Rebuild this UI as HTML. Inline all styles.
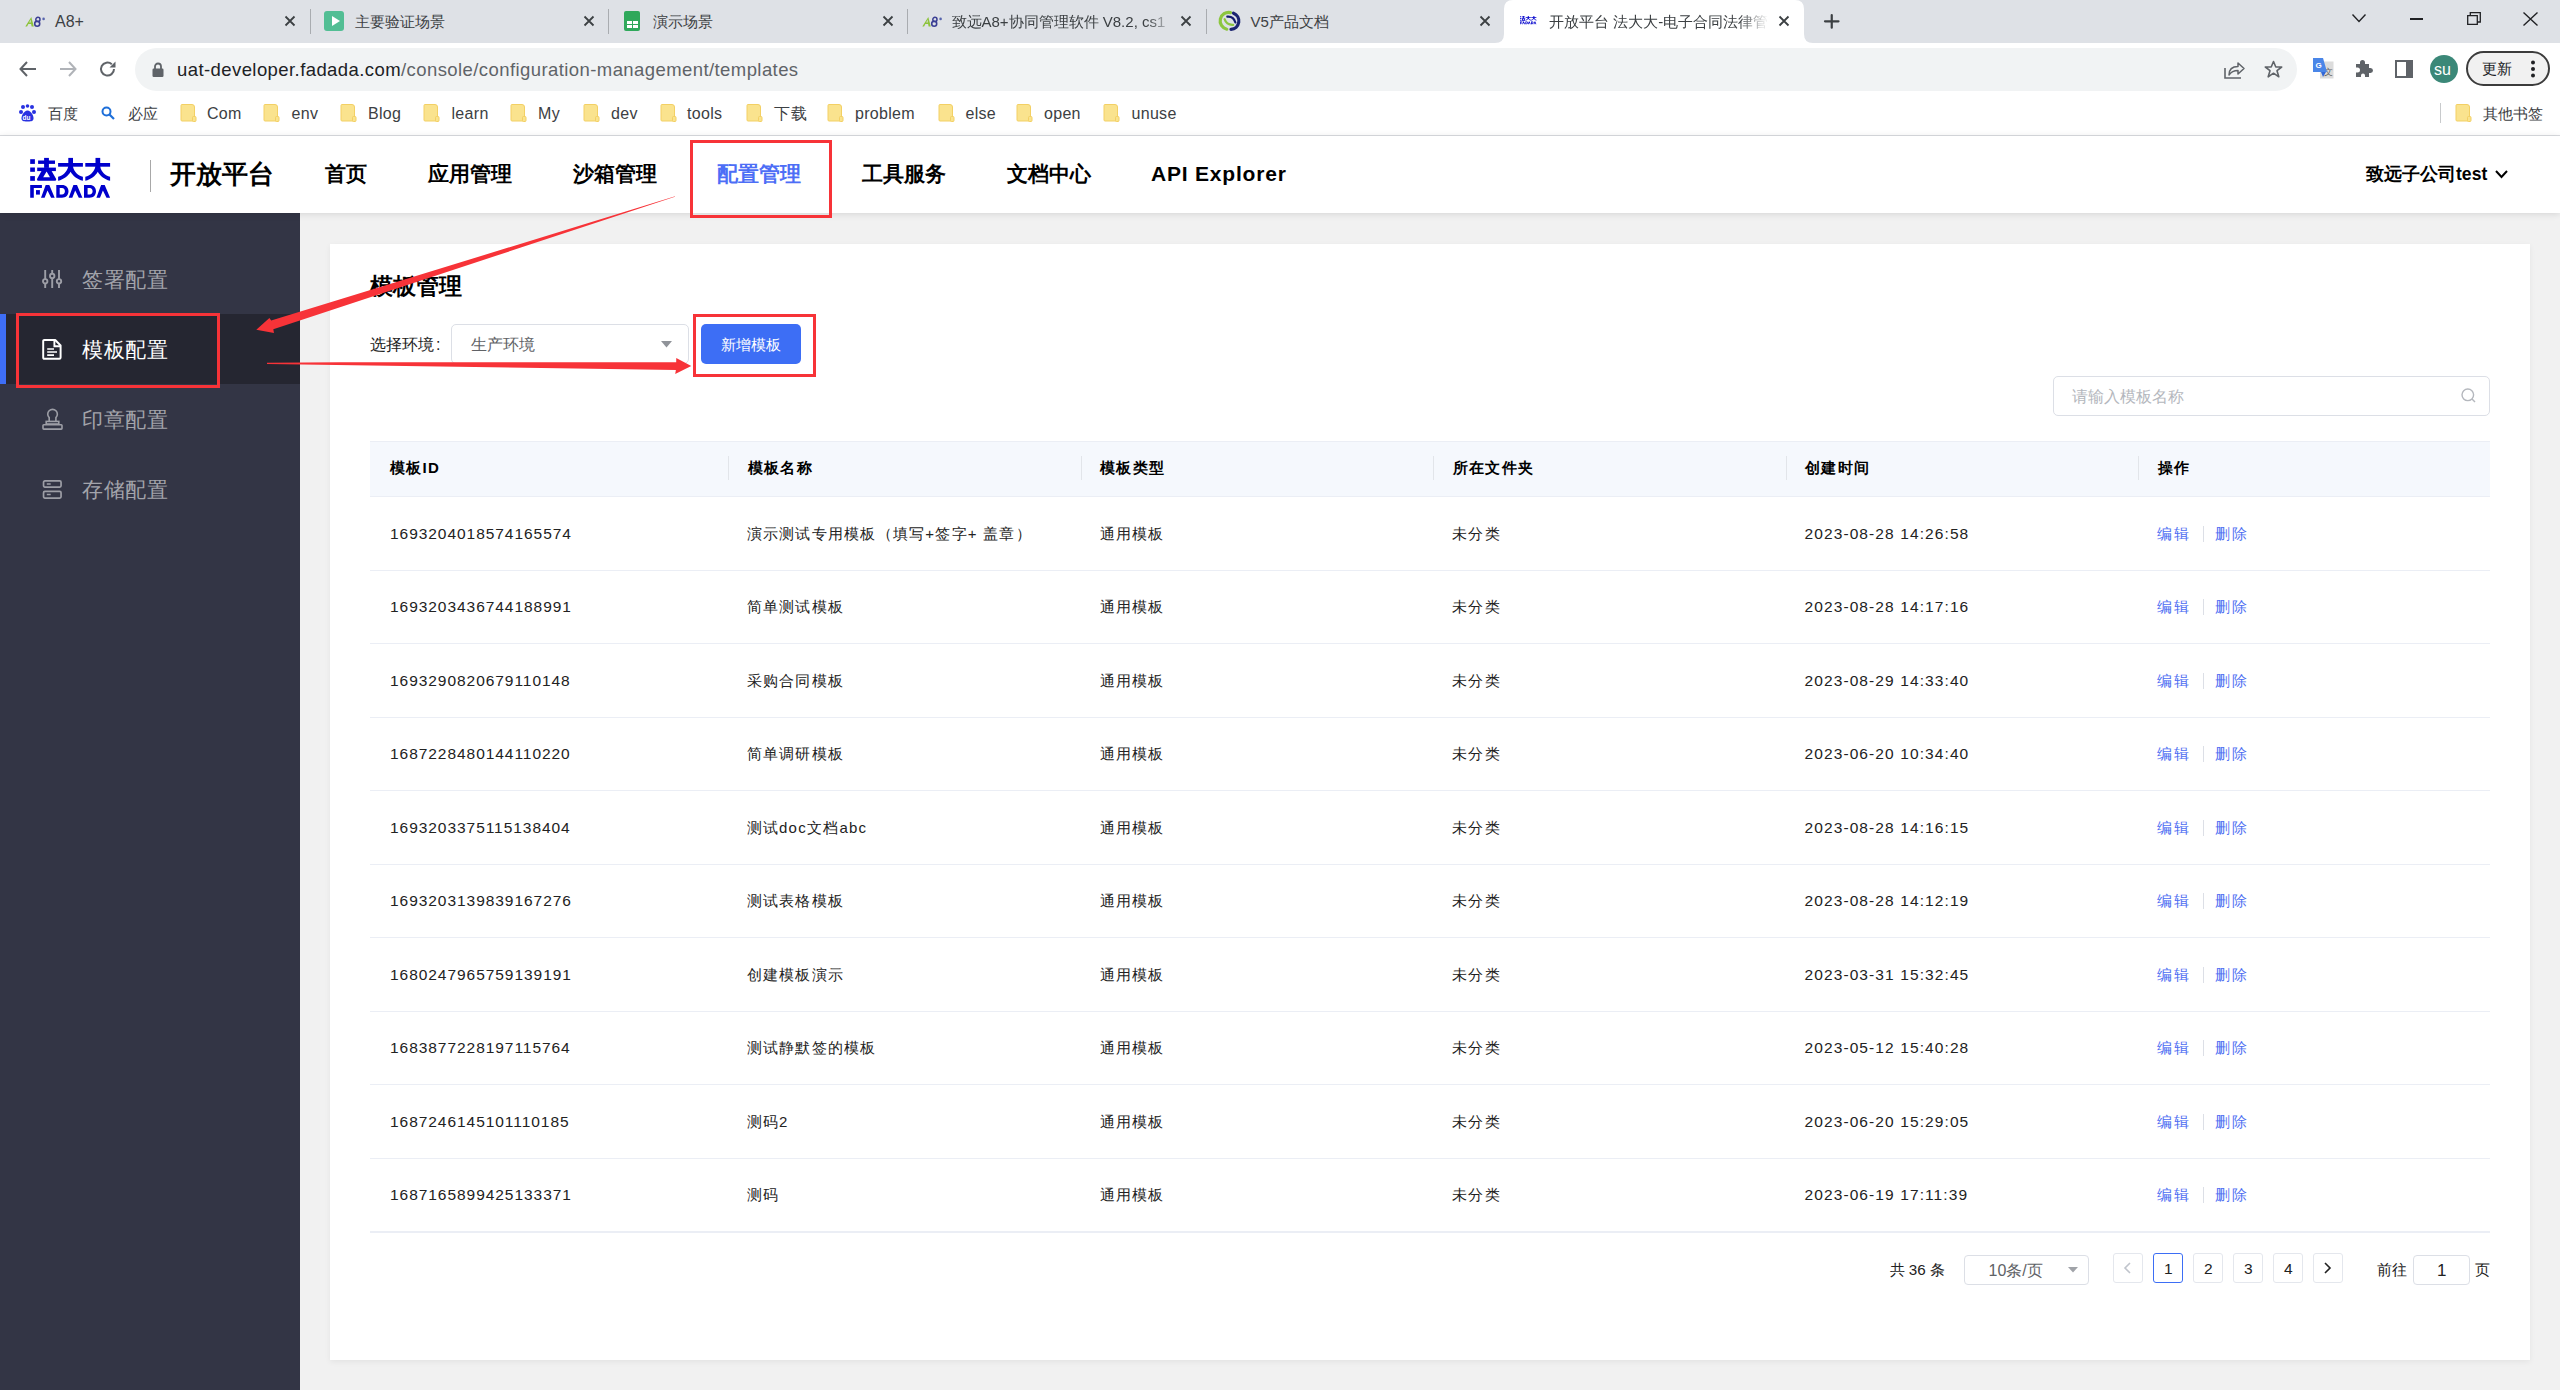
<!DOCTYPE html><html><head><meta charset="utf-8"><style>
html,body{margin:0;padding:0;width:2560px;height:1390px;overflow:hidden;background:#f1f1f1;font-family:"Liberation Sans",sans-serif;}
.t{position:absolute;white-space:nowrap;}
.b{position:absolute;box-sizing:border-box;}
svg{position:absolute;overflow:visible;}
</style></head><body>
<div class="b" style="left:0px;top:0px;width:2560px;height:43px;background:#dee1e6"></div>
<svg style="left:0;top:0" width="2560" height="50"><path d="M1495,43 Q1504,43 1504,34 L1504,9 Q1504,0 1513,0 L1795,0 Q1804,0 1804,9 L1804,34 Q1804,43 1813,43 Z" fill="#fff"/></svg>
<div class="b" style="left:309.5px;top:9px;width:1.0px;height:25px;background:#a9acb0"></div>
<div class="b" style="left:608px;top:9px;width:1px;height:25px;background:#a9acb0"></div>
<div class="b" style="left:906.5px;top:9px;width:1.0px;height:25px;background:#a9acb0"></div>
<div class="b" style="left:1205.5px;top:9px;width:1.0px;height:25px;background:#a9acb0"></div>
<svg style="left:25px;top:15.5px" width="21" height="12"><path d="M0.3,10.4 L6.3,1 L8.8,10.4 H6.6 L6.1,8.1 H3.4 L2.1,10.4 Z M4.3,6.4 H5.8 L5.5,3.6Z" fill="#8dc33b" fill-rule="evenodd"/><ellipse cx="12.9" cy="3.4" rx="2.1" ry="2.1" stroke="#3b3f94" stroke-width="1.5" fill="none"/><ellipse cx="12.2" cy="7.7" rx="2.5" ry="2.5" stroke="#3b3f94" stroke-width="1.6" fill="none"/><circle cx="18.6" cy="2.9" r="1.3" fill="#5764ad"/></svg>
<div class="t" style="left:55px;top:11px;height:22px;line-height:22px;font-size:16px;color:#3c4043">A8+</div>
<svg style="left:284.5px;top:16.2px" width="10" height="10"><path d="M0.5,0.5L9.5,9.5M9.5,0.5L0.5,9.5" stroke="#3c4043" stroke-width="1.8"/></svg>
<div class="b" style="left:323.5px;top:11px;width:20.0px;height:20px;background:#52be94;border-radius:3px"></div>
<svg style="left:331.5px;top:16px" width="8" height="10"><path d="M0,0 L8,5 L0,10Z" fill="#fff"/></svg>
<div class="t" style="left:354.5px;top:11px;height:22px;line-height:22px;font-size:15px;color:#3c4043">主要验证场景</div>
<svg style="left:584.0px;top:16.2px" width="10" height="10"><path d="M0.5,0.5L9.5,9.5M9.5,0.5L0.5,9.5" stroke="#3c4043" stroke-width="1.8"/></svg>
<div class="b" style="left:624px;top:11px;width:16px;height:20px;background:#2fa85b;border-radius:2px"></div>
<div class="b" style="left:627px;top:21px;width:5px;height:3px;background:#fff"></div>
<div class="b" style="left:633px;top:21px;width:5px;height:3px;background:#fff"></div>
<div class="b" style="left:627px;top:25px;width:5px;height:3px;background:#fff"></div>
<div class="b" style="left:633px;top:25px;width:5px;height:3px;background:#fff"></div>
<div class="t" style="left:653px;top:11px;height:22px;line-height:22px;font-size:15px;color:#3c4043">演示场景</div>
<svg style="left:882.5px;top:16.2px" width="10" height="10"><path d="M0.5,0.5L9.5,9.5M9.5,0.5L0.5,9.5" stroke="#3c4043" stroke-width="1.8"/></svg>
<svg style="left:921.5px;top:15.5px" width="21" height="12"><path d="M0.3,10.4 L6.3,1 L8.8,10.4 H6.6 L6.1,8.1 H3.4 L2.1,10.4 Z M4.3,6.4 H5.8 L5.5,3.6Z" fill="#8dc33b" fill-rule="evenodd"/><ellipse cx="12.9" cy="3.4" rx="2.1" ry="2.1" stroke="#3b3f94" stroke-width="1.5" fill="none"/><ellipse cx="12.2" cy="7.7" rx="2.5" ry="2.5" stroke="#3b3f94" stroke-width="1.6" fill="none"/><circle cx="18.6" cy="2.9" r="1.3" fill="#5764ad"/></svg>
<div class="t" style="left:951.5px;top:11px;height:22px;line-height:22px;font-size:15px;color:#3c4043;width:222px;overflow:hidden;-webkit-mask-image:linear-gradient(90deg,#000 195px,transparent 222px)">致远A8+协同管理软件 V8.2, cs1</div>
<svg style="left:1181.0px;top:16.2px" width="10" height="10"><path d="M0.5,0.5L9.5,9.5M9.5,0.5L0.5,9.5" stroke="#3c4043" stroke-width="1.8"/></svg>
<svg style="left:1219.8px;top:10.5px" width="21" height="21"><g fill="none" stroke-linecap="round"><path d="M10.5,1.6 A8.4,8.4 0 0 0 6.8,18.2" stroke="#8cc63f" stroke-width="3.2"/><path d="M4.6,8.2 Q6.5,14.2 13.2,13.8" stroke="#8cc63f" stroke-width="2.2"/><path d="M13.5,2.2 A8.4,8.4 0 0 1 11,18.4" stroke="#1b2470" stroke-width="3.2"/><path d="M7.3,5.6 Q13.6,5 15.4,11.5" stroke="#141c6e" stroke-width="2.2"/></g></svg>
<div class="t" style="left:1250.5px;top:11px;height:22px;line-height:22px;font-size:15px;color:#3c4043">V5产品文档</div>
<svg style="left:1480.0px;top:16.2px" width="10" height="10"><path d="M0.5,0.5L9.5,9.5M9.5,0.5L0.5,9.5" stroke="#3c4043" stroke-width="1.8"/></svg>
<svg style="left:1520.3px;top:16.4px" width="18" height="10"><g transform="scale(0.205) translate(-5.2,-5.9)"><g fill="#0000cc">
<rect x="5.2" y="7.2" width="4.7" height="4.7"/><rect x="5.2" y="15.5" width="4.7" height="4.3"/><rect x="5.2" y="24.1" width="4.7" height="4.7"/>
<rect x="19.1" y="5.9" width="4.8" height="10"/><rect x="13.1" y="8.5" width="16.9" height="3.4"/><rect x="12.2" y="15.6" width="18.7" height="3.5"/>
<path d="M16.5,19.1 L11.9,27.3 L12.6,28.8 L30.6,28.8 L31.3,27.3 L26.6,19.1 Z M18.2,25.2 L21.6,19.4 L25,25.2 Z" fill-rule="evenodd"/>
<g><rect x="33.1" y="11" width="24.8" height="3.7"/><rect x="43.3" y="5.9" width="4.7" height="9.6"/>
<path d="M43.2,14.5 C42,20 38,23.5 33.1,24.8 L33.1,28.8 C39,27.5 43.5,23.5 45.6,19.8 C47.7,23.5 52,27.5 57.9,28.8 L57.9,24.8 C53,23.5 49,20 48,14.5 Z"/></g>
<g transform="translate(27.2,0)"><rect x="33.1" y="11" width="24.8" height="3.7"/><rect x="43.3" y="5.9" width="4.7" height="9.6"/>
<path d="M43.2,14.5 C42,20 38,23.5 33.1,24.8 L33.1,28.8 C39,27.5 43.5,23.5 45.6,19.8 C47.7,23.5 52,27.5 57.9,28.8 L57.9,24.8 C53,23.5 49,20 48,14.5 Z"/></g>
<path d="M5.2,32.9 H16.9 V36 H8.8 V45.7 H5.2 Z"/><rect x="11" y="38.1" width="3.9" height="4.5"/>
<path d="M20.7,32.9 H24.3 L29.7,45.7 H26.1 L22.5,38.6 L19.6,45.7 H16 Z"/>
<path d="M31.3,32.9 H37 C41,32.9 43.5,35.5 43.5,39.3 C43.5,43.1 41,45.7 37,45.7 H31.3 Z M34.7,36 V42.6 H37 C38.9,42.6 39.9,41.2 39.9,39.3 C39.9,37.4 38.9,36 37,36 Z" fill-rule="evenodd"/>
<path transform="translate(27.7,0)" d="M20.7,32.9 H24.3 L29.7,45.7 H26.1 L22.5,38.6 L19.6,45.7 H16 Z"/>
<path d="M59,32.9 H64.6 C68.6,32.9 71,35.5 71,39.3 C71,43.1 68.6,45.7 64.6,45.7 H59 Z M62.6,36 V42.6 H64.6 C66.5,42.6 67.6,41.2 67.6,39.3 C67.6,37.4 66.5,36 64.6,36 Z" fill-rule="evenodd"/>
<path transform="translate(55.4,0)" d="M20.7,32.9 H24.3 L29.7,45.7 H26.1 L22.5,38.6 L19.6,45.7 H16 Z"/>
</g></g></svg>
<div class="t" style="left:1549px;top:11px;height:22px;line-height:22px;font-size:15px;color:#3c4043;width:220px;overflow:hidden;-webkit-mask-image:linear-gradient(90deg,#000 190px,transparent 220px)">开放平台 法大大-电子合同法律管</div>
<svg style="left:1778.5px;top:16.2px" width="10" height="10"><path d="M0.5,0.5L9.5,9.5M9.5,0.5L0.5,9.5" stroke="#3c4043" stroke-width="1.8"/></svg>
<svg style="left:1823.5px;top:14px" width="16" height="15"><path d="M7.75,1V13.7M1,7.3H14.5" stroke="#3c4043" stroke-width="2.2" stroke-linecap="round"/></svg>
<svg style="left:2352px;top:14px" width="14" height="9"><path d="M0.5,0.5L7,7.5L13.5,0.5" fill="none" stroke="#202124" stroke-width="1.4"/></svg>
<div class="b" style="left:2410px;top:18px;width:13px;height:1.5px;background:#202124"></div>
<svg style="left:2467px;top:12px" width="14" height="13"><path d="M0.7,3.7H10.3V12.3H0.7Z M3.3,3.7V0.7H13.3V10H10.3" fill="none" stroke="#202124" stroke-width="1.3"/></svg>
<svg style="left:2523px;top:12px" width="15" height="14"><path d="M0.5,0.5L14.5,13.5M14.5,0.5L0.5,13.5" stroke="#202124" stroke-width="1.4"/></svg>
<div class="b" style="left:0px;top:43px;width:2560px;height:49px;background:#fff"></div>
<svg style="left:19px;top:61px" width="18" height="16"><path d="M17,8H2M8,1L1.5,8L8,15" fill="none" stroke="#5f6368" stroke-width="2"/></svg>
<svg style="left:59px;top:61px" width="18" height="16"><path d="M1,8H16M10,1L16.5,8L10,15" fill="none" stroke="#b0b3b8" stroke-width="2"/></svg>
<svg style="left:99px;top:60px" width="18" height="18"><path d="M15,9A6.5,6.5 0 1 1 12.8,4.2" fill="none" stroke="#5f6368" stroke-width="2"/><path d="M16.5,1.5V7.5H10.5Z" fill="#5f6368"/></svg>
<div class="b" style="left:135px;top:48px;width:2162px;height:43px;background:#f1f3f4;border-radius:22px"></div>
<svg style="left:152px;top:62px" width="12" height="15"><path d="M3,7V4.5A3,3 0 0 1 9,4.5V7" fill="none" stroke="#5f6368" stroke-width="1.8"/><rect x="0.5" y="6.5" width="11" height="8.5" rx="1.2" fill="#5f6368"/></svg>
<div class="t" style="left:177px;top:56px;height:28px;line-height:28px;font-size:18.5px;letter-spacing:0.42px;color:#202124">uat-developer.fadada.com<span style="color:#5f6368">/console/configuration-management/templates</span></div>
<svg style="left:2224px;top:60px" width="21" height="19"><path d="M1,8V18H17" fill="none" stroke="#5f6368" stroke-width="1.6"/><path d="M5,15C5,9 9,6.5 14,6.5V3L20,8.5L14,14V10.5C10,10.5 7,12 5,15Z" fill="none" stroke="#5f6368" stroke-width="1.5" stroke-linejoin="round"/></svg>
<svg style="left:2264px;top:60px" width="19" height="19"><path d="M9.5,1.5L11.8,7H17.7L13,10.7L14.8,16.8L9.5,13.2L4.2,16.8L6,10.7L1.3,7H7.2Z" fill="none" stroke="#5f6368" stroke-width="1.6" stroke-linejoin="round"/></svg>
<svg style="left:2313px;top:58px" width="21" height="21"><rect x="7" y="3.5" width="13.5" height="17" fill="#dcdcdc"/><text x="11" y="17" font-size="9" fill="#666" font-family="Liberation Sans">文</text><path d="M0,0H10L14,14H0Z" fill="#4a86e8"/><path d="M8,14H13L10,19Z" fill="#3367d6"/><text x="2.5" y="10" font-size="8" font-weight="bold" fill="#fff" font-family="Liberation Sans">G</text></svg>
<svg style="left:2354px;top:59px" width="20" height="19"><path d="M2,5H6V3.5A2.5,2.5 0 0 1 11,3.5V5H15V9H16.5A2.5,2.5 0 0 1 16.5,14H15V18H11V16.5A2,2 0 0 0 7,16.5V18H2V13.5H3.5A2.5,2.5 0 0 0 3.5,8.5H2Z" fill="#5f6368"/></svg>
<svg style="left:2395px;top:60px" width="18" height="18"><rect x="1" y="1" width="16" height="16" fill="none" stroke="#5f6368" stroke-width="2"/><rect x="11" y="1" width="6" height="16" fill="#5f6368"/></svg>
<div class="b" style="left:2430px;top:55px;width:28px;height:28px;background:#3b8878;border-radius:50%"></div>
<div class="t" style="left:2434px;top:56.50px;height:25px;line-height:25px;font-size:16px;color:#fff;font-weight:normal;letter-spacing:0px;">su</div>
<div class="b" style="left:2466px;top:51px;width:84px;height:35px;border:2px solid #3c3c3c;border-radius:18px;background:#f1f1f1"></div>
<div class="t" style="left:2482px;top:56.50px;height:24px;line-height:24px;font-size:15px;color:#202124;font-weight:normal;letter-spacing:0px;">更新</div>
<svg style="left:2530px;top:60px" width="6" height="18"><circle cx="3" cy="2.5" r="2" fill="#202124"/><circle cx="3" cy="9" r="2" fill="#202124"/><circle cx="3" cy="15.5" r="2" fill="#202124"/></svg>
<div class="b" style="left:0px;top:92px;width:2560px;height:43px;background:#fff"></div>
<div class="b" style="left:0px;top:135px;width:2560px;height:1px;background:#dadce0"></div>
<svg style="left:19px;top:104px" width="17" height="18"><circle cx="4" cy="3" r="2" fill="#2932e1"/><circle cx="8.5" cy="2" r="1.8" fill="#2932e1"/><circle cx="13" cy="3" r="2" fill="#2932e1"/><circle cx="2" cy="8" r="2" fill="#2932e1"/><circle cx="15" cy="8" r="2" fill="#2932e1"/><path d="M8.5,6.5C5,6.5 2,12 2.5,15C3,17.5 6,17.5 8.5,17.5C11,17.5 14,17.5 14.5,15C15,12 12,6.5 8.5,6.5Z" fill="#2932e1"/><text x="3.6" y="16" font-size="6.5" font-weight="bold" fill="#fff" font-family="Liberation Sans">du</text></svg>
<div class="t" style="left:48px;top:101.50px;height:24px;line-height:24px;font-size:15px;color:#3c4043;font-weight:normal;letter-spacing:0px;">百度</div>
<svg style="left:101px;top:106px" width="14" height="14"><circle cx="5.5" cy="5.5" r="4" fill="none" stroke="#1e6fd9" stroke-width="2"/><path d="M8.5,8.5L13,13" stroke="#1e6fd9" stroke-width="2.2"/></svg>
<div class="t" style="left:127.5px;top:101.50px;height:24px;line-height:24px;font-size:15px;color:#3c4043;font-weight:normal;letter-spacing:0px;">必应</div>
<svg style="left:180px;top:104px" width="17" height="18"><path d="M1,1.5Q1,0.5 2,0.5H12Q14.5,0.5 14.5,3V14.5H13.5V17H2Q1,17 1,16Z" fill="#fae38e" stroke="#f3d064" stroke-width="1"/><rect x="12.5" y="12.5" width="3.5" height="5" rx="1" fill="#fae38e" stroke="#f3d064" stroke-width="1"/></svg>
<div class="t" style="left:207px;top:101.00px;height:25px;line-height:25px;font-size:16px;color:#3c4043;font-weight:normal;letter-spacing:0.3px;">Com</div>
<svg style="left:262.5px;top:104px" width="17" height="18"><path d="M1,1.5Q1,0.5 2,0.5H12Q14.5,0.5 14.5,3V14.5H13.5V17H2Q1,17 1,16Z" fill="#fae38e" stroke="#f3d064" stroke-width="1"/><rect x="12.5" y="12.5" width="3.5" height="5" rx="1" fill="#fae38e" stroke="#f3d064" stroke-width="1"/></svg>
<div class="t" style="left:291.5px;top:101.00px;height:25px;line-height:25px;font-size:16px;color:#3c4043;font-weight:normal;letter-spacing:0.3px;">env</div>
<svg style="left:340px;top:104px" width="17" height="18"><path d="M1,1.5Q1,0.5 2,0.5H12Q14.5,0.5 14.5,3V14.5H13.5V17H2Q1,17 1,16Z" fill="#fae38e" stroke="#f3d064" stroke-width="1"/><rect x="12.5" y="12.5" width="3.5" height="5" rx="1" fill="#fae38e" stroke="#f3d064" stroke-width="1"/></svg>
<div class="t" style="left:368px;top:101.00px;height:25px;line-height:25px;font-size:16px;color:#3c4043;font-weight:normal;letter-spacing:0.3px;">Blog</div>
<svg style="left:423px;top:104px" width="17" height="18"><path d="M1,1.5Q1,0.5 2,0.5H12Q14.5,0.5 14.5,3V14.5H13.5V17H2Q1,17 1,16Z" fill="#fae38e" stroke="#f3d064" stroke-width="1"/><rect x="12.5" y="12.5" width="3.5" height="5" rx="1" fill="#fae38e" stroke="#f3d064" stroke-width="1"/></svg>
<div class="t" style="left:451.5px;top:101.00px;height:25px;line-height:25px;font-size:16px;color:#3c4043;font-weight:normal;letter-spacing:0.3px;">learn</div>
<svg style="left:510px;top:104px" width="17" height="18"><path d="M1,1.5Q1,0.5 2,0.5H12Q14.5,0.5 14.5,3V14.5H13.5V17H2Q1,17 1,16Z" fill="#fae38e" stroke="#f3d064" stroke-width="1"/><rect x="12.5" y="12.5" width="3.5" height="5" rx="1" fill="#fae38e" stroke="#f3d064" stroke-width="1"/></svg>
<div class="t" style="left:538px;top:101.00px;height:25px;line-height:25px;font-size:16px;color:#3c4043;font-weight:normal;letter-spacing:0.3px;">My</div>
<svg style="left:583px;top:104px" width="17" height="18"><path d="M1,1.5Q1,0.5 2,0.5H12Q14.5,0.5 14.5,3V14.5H13.5V17H2Q1,17 1,16Z" fill="#fae38e" stroke="#f3d064" stroke-width="1"/><rect x="12.5" y="12.5" width="3.5" height="5" rx="1" fill="#fae38e" stroke="#f3d064" stroke-width="1"/></svg>
<div class="t" style="left:611px;top:101.00px;height:25px;line-height:25px;font-size:16px;color:#3c4043;font-weight:normal;letter-spacing:0.3px;">dev</div>
<svg style="left:660px;top:104px" width="17" height="18"><path d="M1,1.5Q1,0.5 2,0.5H12Q14.5,0.5 14.5,3V14.5H13.5V17H2Q1,17 1,16Z" fill="#fae38e" stroke="#f3d064" stroke-width="1"/><rect x="12.5" y="12.5" width="3.5" height="5" rx="1" fill="#fae38e" stroke="#f3d064" stroke-width="1"/></svg>
<div class="t" style="left:687px;top:101.00px;height:25px;line-height:25px;font-size:16px;color:#3c4043;font-weight:normal;letter-spacing:0.3px;">tools</div>
<svg style="left:746px;top:104px" width="17" height="18"><path d="M1,1.5Q1,0.5 2,0.5H12Q14.5,0.5 14.5,3V14.5H13.5V17H2Q1,17 1,16Z" fill="#fae38e" stroke="#f3d064" stroke-width="1"/><rect x="12.5" y="12.5" width="3.5" height="5" rx="1" fill="#fae38e" stroke="#f3d064" stroke-width="1"/></svg>
<div class="t" style="left:774.3px;top:101.00px;height:25px;line-height:25px;font-size:16px;color:#3c4043;font-weight:normal;letter-spacing:0.3px;">下载</div>
<svg style="left:827px;top:104px" width="17" height="18"><path d="M1,1.5Q1,0.5 2,0.5H12Q14.5,0.5 14.5,3V14.5H13.5V17H2Q1,17 1,16Z" fill="#fae38e" stroke="#f3d064" stroke-width="1"/><rect x="12.5" y="12.5" width="3.5" height="5" rx="1" fill="#fae38e" stroke="#f3d064" stroke-width="1"/></svg>
<div class="t" style="left:855px;top:101.00px;height:25px;line-height:25px;font-size:16px;color:#3c4043;font-weight:normal;letter-spacing:0.3px;">problem</div>
<svg style="left:937.5px;top:104px" width="17" height="18"><path d="M1,1.5Q1,0.5 2,0.5H12Q14.5,0.5 14.5,3V14.5H13.5V17H2Q1,17 1,16Z" fill="#fae38e" stroke="#f3d064" stroke-width="1"/><rect x="12.5" y="12.5" width="3.5" height="5" rx="1" fill="#fae38e" stroke="#f3d064" stroke-width="1"/></svg>
<div class="t" style="left:965.5px;top:101.00px;height:25px;line-height:25px;font-size:16px;color:#3c4043;font-weight:normal;letter-spacing:0.3px;">else</div>
<svg style="left:1016px;top:104px" width="17" height="18"><path d="M1,1.5Q1,0.5 2,0.5H12Q14.5,0.5 14.5,3V14.5H13.5V17H2Q1,17 1,16Z" fill="#fae38e" stroke="#f3d064" stroke-width="1"/><rect x="12.5" y="12.5" width="3.5" height="5" rx="1" fill="#fae38e" stroke="#f3d064" stroke-width="1"/></svg>
<div class="t" style="left:1044px;top:101.00px;height:25px;line-height:25px;font-size:16px;color:#3c4043;font-weight:normal;letter-spacing:0.3px;">open</div>
<svg style="left:1103px;top:104px" width="17" height="18"><path d="M1,1.5Q1,0.5 2,0.5H12Q14.5,0.5 14.5,3V14.5H13.5V17H2Q1,17 1,16Z" fill="#fae38e" stroke="#f3d064" stroke-width="1"/><rect x="12.5" y="12.5" width="3.5" height="5" rx="1" fill="#fae38e" stroke="#f3d064" stroke-width="1"/></svg>
<div class="t" style="left:1131.5px;top:101.00px;height:25px;line-height:25px;font-size:16px;color:#3c4043;font-weight:normal;letter-spacing:0.3px;">unuse</div>
<div class="b" style="left:2440px;top:103px;width:1px;height:20px;background:#c8cacc"></div>
<svg style="left:2455px;top:104px" width="17" height="18"><path d="M1,1.5Q1,0.5 2,0.5H12Q14.5,0.5 14.5,3V14.5H13.5V17H2Q1,17 1,16Z" fill="#fae38e" stroke="#f3d064" stroke-width="1"/><rect x="12.5" y="12.5" width="3.5" height="5" rx="1" fill="#fae38e" stroke="#f3d064" stroke-width="1"/></svg>
<div class="t" style="left:2482.5px;top:101.50px;height:24px;line-height:24px;font-size:15px;color:#3c4043;font-weight:normal;letter-spacing:0px;">其他书签</div>
<div class="b" style="left:0px;top:213px;width:300px;height:1177px;background:#333545"></div>
<div class="b" style="left:0px;top:314px;width:300px;height:70px;background:#252631"></div>
<div class="b" style="left:0px;top:314px;width:6px;height:70px;background:#3e6ef6"></div>
<div class="t" style="left:82px;top:263.00px;height:34px;line-height:34px;font-size:21.4px;color:#a3a4ab;font-weight:normal;letter-spacing:0.65px;">签署配置</div>
<div class="t" style="left:82px;top:333.00px;height:34px;line-height:34px;font-size:21.4px;color:#ffffff;font-weight:normal;letter-spacing:0.65px;">模板配置</div>
<div class="t" style="left:82px;top:403.00px;height:34px;line-height:34px;font-size:21.4px;color:#a3a4ab;font-weight:normal;letter-spacing:0.65px;">印章配置</div>
<div class="t" style="left:82px;top:473.00px;height:34px;line-height:34px;font-size:21.4px;color:#a3a4ab;font-weight:normal;letter-spacing:0.65px;">存储配置</div>
<svg style="left:42px;top:270px" width="22" height="20"><g fill="none" stroke="#9d9ea6" stroke-width="1.9"><path d="M3.2,0V18M10.2,0V18M17,0V18"/></g><g fill="#333545" stroke="#9d9ea6" stroke-width="1.9"><circle cx="3.2" cy="11.3" r="2.2"/><circle cx="10.2" cy="5.9" r="2.2"/><circle cx="17" cy="11.3" r="2.2"/></g></svg>
<svg style="left:42px;top:339px" width="21" height="22"><path d="M1.2,2.2Q1.2,1 2.4,1H13.2L18.6,6.5V18.6Q18.6,19.8 17.4,19.8H2.4Q1.2,19.8 1.2,18.6Z" fill="none" stroke="#fff" stroke-width="1.95" stroke-linejoin="round"/><path d="M12.4,1V7.2H18.6" fill="none" stroke="#fff" stroke-width="1.9"/><path d="M5.2,10H12M5.2,13H15M5.2,16.1H12" stroke="#fff" stroke-width="1.6"/></svg>
<svg style="left:42px;top:408px" width="22" height="23"><g fill="none" stroke="#9d9ea6" stroke-width="1.6"><path d="M7.2,13V9.6A4.8,4.8 0 1 1 13.9,9.6V13"/><rect x="4.2" y="13.4" width="12.6" height="2.6"/><rect x="1" y="16.8" width="19" height="4.3" rx="0.8"/></g></svg>
<svg style="left:42px;top:479px" width="21" height="21"><g fill="none" stroke="#9d9ea6" stroke-width="1.7"><rect x="1.55" y="1.85" width="17.5" height="6.3" rx="1.3"/><rect x="1.55" y="12.45" width="17.5" height="6.6" rx="1.3"/></g><path d="M4.8,5.1H8.7M4.8,15.5H8.7" stroke="#9d9ea6" stroke-width="1.5"/></svg>
<div class="b" style="left:0px;top:136px;width:2560px;height:76.5px;background:#fff;box-shadow:0 1px 7px rgba(0,0,0,0.12)"></div>
<svg style="left:25px;top:152px" width="90" height="50"><g fill="#0000cc">
<rect x="5.2" y="7.2" width="4.7" height="4.7"/><rect x="5.2" y="15.5" width="4.7" height="4.3"/><rect x="5.2" y="24.1" width="4.7" height="4.7"/>
<rect x="19.1" y="5.9" width="4.8" height="10"/><rect x="13.1" y="8.5" width="16.9" height="3.4"/><rect x="12.2" y="15.6" width="18.7" height="3.5"/>
<path d="M16.5,19.1 L11.9,27.3 L12.6,28.8 L30.6,28.8 L31.3,27.3 L26.6,19.1 Z M18.2,25.2 L21.6,19.4 L25,25.2 Z" fill-rule="evenodd"/>
<g><rect x="33.1" y="11" width="24.8" height="3.7"/><rect x="43.3" y="5.9" width="4.7" height="9.6"/>
<path d="M43.2,14.5 C42,20 38,23.5 33.1,24.8 L33.1,28.8 C39,27.5 43.5,23.5 45.6,19.8 C47.7,23.5 52,27.5 57.9,28.8 L57.9,24.8 C53,23.5 49,20 48,14.5 Z"/></g>
<g transform="translate(27.2,0)"><rect x="33.1" y="11" width="24.8" height="3.7"/><rect x="43.3" y="5.9" width="4.7" height="9.6"/>
<path d="M43.2,14.5 C42,20 38,23.5 33.1,24.8 L33.1,28.8 C39,27.5 43.5,23.5 45.6,19.8 C47.7,23.5 52,27.5 57.9,28.8 L57.9,24.8 C53,23.5 49,20 48,14.5 Z"/></g>
<path d="M5.2,32.9 H16.9 V36 H8.8 V45.7 H5.2 Z"/><rect x="11" y="38.1" width="3.9" height="4.5"/>
<path d="M20.7,32.9 H24.3 L29.7,45.7 H26.1 L22.5,38.6 L19.6,45.7 H16 Z"/>
<path d="M31.3,32.9 H37 C41,32.9 43.5,35.5 43.5,39.3 C43.5,43.1 41,45.7 37,45.7 H31.3 Z M34.7,36 V42.6 H37 C38.9,42.6 39.9,41.2 39.9,39.3 C39.9,37.4 38.9,36 37,36 Z" fill-rule="evenodd"/>
<path transform="translate(27.7,0)" d="M20.7,32.9 H24.3 L29.7,45.7 H26.1 L22.5,38.6 L19.6,45.7 H16 Z"/>
<path d="M59,32.9 H64.6 C68.6,32.9 71,35.5 71,39.3 C71,43.1 68.6,45.7 64.6,45.7 H59 Z M62.6,36 V42.6 H64.6 C66.5,42.6 67.6,41.2 67.6,39.3 C67.6,37.4 66.5,36 64.6,36 Z" fill-rule="evenodd"/>
<path transform="translate(55.4,0)" d="M20.7,32.9 H24.3 L29.7,45.7 H26.1 L22.5,38.6 L19.6,45.7 H16 Z"/>
</g></svg>
<div class="b" style="left:150px;top:160px;width:1px;height:32px;background:#a8a8a8"></div>
<div class="t" style="left:169.5px;top:153.00px;height:42px;line-height:42px;font-size:26.3px;color:#000;font-weight:bold;letter-spacing:0px;">开放平台</div>
<div class="t" style="left:325px;top:156.90px;height:33px;line-height:33px;font-size:20.8px;color:#000;font-weight:bold;letter-spacing:0px;">首页</div>
<div class="t" style="left:427.5px;top:156.90px;height:33px;line-height:33px;font-size:20.8px;color:#000;font-weight:bold;letter-spacing:0px;">应用管理</div>
<div class="t" style="left:572.5px;top:156.90px;height:33px;line-height:33px;font-size:20.8px;color:#000;font-weight:bold;letter-spacing:0px;">沙箱管理</div>
<div class="t" style="left:717px;top:156.90px;height:33px;line-height:33px;font-size:20.8px;color:#4d6ef6;font-weight:bold;letter-spacing:0px;">配置管理</div>
<div class="t" style="left:861.5px;top:156.90px;height:33px;line-height:33px;font-size:20.8px;color:#000;font-weight:bold;letter-spacing:0px;">工具服务</div>
<div class="t" style="left:1007px;top:156.90px;height:33px;line-height:33px;font-size:20.8px;color:#000;font-weight:bold;letter-spacing:0px;">文档中心</div>
<div class="t" style="left:1151px;top:156.90px;height:33px;line-height:33px;font-size:21px;color:#000;font-weight:bold;letter-spacing:0.8px;">API Explorer</div>
<div class="t" style="left:2366px;top:160.00px;height:28px;line-height:28px;font-size:17.6px;color:#000;font-weight:bold;letter-spacing:0px;">致远子公司test</div>
<svg style="left:2495px;top:170px" width="13" height="9"><path d="M1,1L6.5,7L12,1" fill="none" stroke="#000" stroke-width="2"/></svg>
<div class="b" style="left:330px;top:244px;width:2200px;height:1115.5px;background:#fff;box-shadow:0 2px 6px rgba(0,0,0,0.06)"></div>
<div class="t" style="left:369.5px;top:268.20px;height:36px;line-height:36px;font-size:23px;color:#000;font-weight:bold;letter-spacing:0px;">模板管理</div>
<div class="t" style="left:369.5px;top:332.00px;height:25px;line-height:25px;font-size:16px;color:#222;font-weight:normal;letter-spacing:0px;">选择环境<span style="margin-left:2.5px">:</span></div>
<div class="b" style="left:451px;top:324px;width:238px;height:40px;border:1px solid #dcdfe6;border-radius:5px;background:#fff"></div>
<div class="t" style="left:470.5px;top:332.00px;height:25px;line-height:25px;font-size:16.2px;color:#606266;font-weight:normal;letter-spacing:0px;">生产环境</div>
<svg style="left:661px;top:340.5px" width="11" height="7"><path d="M0,0H11L5.5,6.5Z" fill="#909399"/></svg>
<div class="b" style="left:701px;top:324px;width:100px;height:40px;background:#3d6ef5;border-radius:5px"></div>
<div class="t" style="left:720.5px;top:332.60px;height:24px;line-height:24px;font-size:15px;color:#fff;font-weight:normal;letter-spacing:0.2px;">新增模板</div>
<div class="b" style="left:2053px;top:376px;width:437px;height:40px;border:1px solid #dcdfe6;border-radius:5px;background:#fff"></div>
<div class="t" style="left:2072px;top:383.50px;height:25px;line-height:25px;font-size:16.2px;color:#b4b7bd;font-weight:normal;letter-spacing:0px;">请输入模板名称</div>
<svg style="left:2461px;top:388px" width="15" height="15"><circle cx="6.8" cy="6.8" r="5.8" fill="none" stroke="#b4b7bd" stroke-width="1.4"/><path d="M11,11L14,14" stroke="#b4b7bd" stroke-width="1.4"/></svg>
<div class="b" style="left:370px;top:441px;width:2120px;height:55px;background:#f5f8fd"></div>
<div class="b" style="left:370px;top:441px;width:2120px;height:1px;background:#ebeef5"></div>
<div class="b" style="left:370px;top:496px;width:2120px;height:1px;background:#ebeef5"></div>
<div class="t" style="left:390px;top:455.80px;height:24px;line-height:24px;font-size:15px;color:#000;font-weight:bold;letter-spacing:1.25px;">模板ID</div>
<div class="b" style="left:728.3px;top:455.5px;width:1.0px;height:24.5px;background:#e2e5ea"></div>
<div class="t" style="left:747.8px;top:455.80px;height:24px;line-height:24px;font-size:15px;color:#000;font-weight:bold;letter-spacing:1.25px;">模板名称</div>
<div class="b" style="left:1080.7px;top:455.5px;width:1.0px;height:24.5px;background:#e2e5ea"></div>
<div class="t" style="left:1100.2px;top:455.80px;height:24px;line-height:24px;font-size:15px;color:#000;font-weight:bold;letter-spacing:1.25px;">模板类型</div>
<div class="b" style="left:1433.3px;top:455.5px;width:1.0px;height:24.5px;background:#e2e5ea"></div>
<div class="t" style="left:1452.8px;top:455.80px;height:24px;line-height:24px;font-size:15px;color:#000;font-weight:bold;letter-spacing:1.25px;">所在文件夹</div>
<div class="b" style="left:1785.6px;top:455.5px;width:1.0px;height:24.5px;background:#e2e5ea"></div>
<div class="t" style="left:1805.1px;top:455.80px;height:24px;line-height:24px;font-size:15px;color:#000;font-weight:bold;letter-spacing:1.25px;">创建时间</div>
<div class="b" style="left:2138.2px;top:455.5px;width:1.0px;height:24.5px;background:#e2e5ea"></div>
<div class="t" style="left:2157.7px;top:455.80px;height:24px;line-height:24px;font-size:15px;color:#000;font-weight:bold;letter-spacing:1.25px;">操作</div>
<div class="b" style="left:370px;top:569.54px;width:2120px;height:1.0px;background:#ebeef5"></div>
<div class="t" style="left:390px;top:521.90px;height:24px;line-height:24px;font-size:15.5px;color:#222;font-weight:normal;letter-spacing:0.95px;">1693204018574165574</div>
<div class="t" style="left:746.5px;top:521.90px;height:24px;line-height:24px;font-size:15px;color:#222;font-weight:normal;letter-spacing:1.25px;">演示测试专用模板（填写+签字+ 盖章）</div>
<div class="t" style="left:1099.5px;top:521.90px;height:24px;line-height:24px;font-size:15px;color:#222;font-weight:normal;letter-spacing:1.25px;">通用模板</div>
<div class="t" style="left:1452px;top:521.90px;height:24px;line-height:24px;font-size:15px;color:#222;font-weight:normal;letter-spacing:1.25px;">未分类</div>
<div class="t" style="left:1804.5px;top:521.90px;height:24px;line-height:24px;font-size:15.5px;color:#222;font-weight:normal;letter-spacing:1.1px;">2023-08-28 14:26:58</div>
<div class="t" style="left:2157px;top:521.90px;height:24px;line-height:24px;font-size:15px;color:#4e6ef2;font-weight:normal;letter-spacing:2.2px;">编辑</div>
<div class="b" style="left:2202.5px;top:525.9px;width:1.0px;height:16.0px;background:#dcdfe6"></div>
<div class="t" style="left:2215px;top:521.90px;height:24px;line-height:24px;font-size:15px;color:#4e6ef2;font-weight:normal;letter-spacing:2.2px;">删除</div>
<div class="b" style="left:370px;top:643.08px;width:2120px;height:1.0px;background:#ebeef5"></div>
<div class="t" style="left:390px;top:595.35px;height:24px;line-height:24px;font-size:15.5px;color:#222;font-weight:normal;letter-spacing:0.95px;">1693203436744188991</div>
<div class="t" style="left:746.5px;top:595.35px;height:24px;line-height:24px;font-size:15px;color:#222;font-weight:normal;letter-spacing:1.25px;">简单测试模板</div>
<div class="t" style="left:1099.5px;top:595.35px;height:24px;line-height:24px;font-size:15px;color:#222;font-weight:normal;letter-spacing:1.25px;">通用模板</div>
<div class="t" style="left:1452px;top:595.35px;height:24px;line-height:24px;font-size:15px;color:#222;font-weight:normal;letter-spacing:1.25px;">未分类</div>
<div class="t" style="left:1804.5px;top:595.35px;height:24px;line-height:24px;font-size:15.5px;color:#222;font-weight:normal;letter-spacing:1.1px;">2023-08-28 14:17:16</div>
<div class="t" style="left:2157px;top:595.35px;height:24px;line-height:24px;font-size:15px;color:#4e6ef2;font-weight:normal;letter-spacing:2.2px;">编辑</div>
<div class="b" style="left:2202.5px;top:599.35px;width:1.0px;height:16.0px;background:#dcdfe6"></div>
<div class="t" style="left:2215px;top:595.35px;height:24px;line-height:24px;font-size:15px;color:#4e6ef2;font-weight:normal;letter-spacing:2.2px;">删除</div>
<div class="b" style="left:370px;top:716.62px;width:2120px;height:1.0px;background:#ebeef5"></div>
<div class="t" style="left:390px;top:668.80px;height:24px;line-height:24px;font-size:15.5px;color:#222;font-weight:normal;letter-spacing:0.95px;">1693290820679110148</div>
<div class="t" style="left:746.5px;top:668.80px;height:24px;line-height:24px;font-size:15px;color:#222;font-weight:normal;letter-spacing:1.25px;">采购合同模板</div>
<div class="t" style="left:1099.5px;top:668.80px;height:24px;line-height:24px;font-size:15px;color:#222;font-weight:normal;letter-spacing:1.25px;">通用模板</div>
<div class="t" style="left:1452px;top:668.80px;height:24px;line-height:24px;font-size:15px;color:#222;font-weight:normal;letter-spacing:1.25px;">未分类</div>
<div class="t" style="left:1804.5px;top:668.80px;height:24px;line-height:24px;font-size:15.5px;color:#222;font-weight:normal;letter-spacing:1.1px;">2023-08-29 14:33:40</div>
<div class="t" style="left:2157px;top:668.80px;height:24px;line-height:24px;font-size:15px;color:#4e6ef2;font-weight:normal;letter-spacing:2.2px;">编辑</div>
<div class="b" style="left:2202.5px;top:672.8px;width:1.0px;height:16.0px;background:#dcdfe6"></div>
<div class="t" style="left:2215px;top:668.80px;height:24px;line-height:24px;font-size:15px;color:#4e6ef2;font-weight:normal;letter-spacing:2.2px;">删除</div>
<div class="b" style="left:370px;top:790.16px;width:2120px;height:1.0px;background:#ebeef5"></div>
<div class="t" style="left:390px;top:742.25px;height:24px;line-height:24px;font-size:15.5px;color:#222;font-weight:normal;letter-spacing:0.95px;">1687228480144110220</div>
<div class="t" style="left:746.5px;top:742.25px;height:24px;line-height:24px;font-size:15px;color:#222;font-weight:normal;letter-spacing:1.25px;">简单调研模板</div>
<div class="t" style="left:1099.5px;top:742.25px;height:24px;line-height:24px;font-size:15px;color:#222;font-weight:normal;letter-spacing:1.25px;">通用模板</div>
<div class="t" style="left:1452px;top:742.25px;height:24px;line-height:24px;font-size:15px;color:#222;font-weight:normal;letter-spacing:1.25px;">未分类</div>
<div class="t" style="left:1804.5px;top:742.25px;height:24px;line-height:24px;font-size:15.5px;color:#222;font-weight:normal;letter-spacing:1.1px;">2023-06-20 10:34:40</div>
<div class="t" style="left:2157px;top:742.25px;height:24px;line-height:24px;font-size:15px;color:#4e6ef2;font-weight:normal;letter-spacing:2.2px;">编辑</div>
<div class="b" style="left:2202.5px;top:746.25px;width:1.0px;height:16.0px;background:#dcdfe6"></div>
<div class="t" style="left:2215px;top:742.25px;height:24px;line-height:24px;font-size:15px;color:#4e6ef2;font-weight:normal;letter-spacing:2.2px;">删除</div>
<div class="b" style="left:370px;top:863.7px;width:2120px;height:1.0px;background:#ebeef5"></div>
<div class="t" style="left:390px;top:815.70px;height:24px;line-height:24px;font-size:15.5px;color:#222;font-weight:normal;letter-spacing:0.95px;">1693203375115138404</div>
<div class="t" style="left:746.5px;top:815.70px;height:24px;line-height:24px;font-size:15px;color:#222;font-weight:normal;letter-spacing:1.25px;">测试doc文档abc</div>
<div class="t" style="left:1099.5px;top:815.70px;height:24px;line-height:24px;font-size:15px;color:#222;font-weight:normal;letter-spacing:1.25px;">通用模板</div>
<div class="t" style="left:1452px;top:815.70px;height:24px;line-height:24px;font-size:15px;color:#222;font-weight:normal;letter-spacing:1.25px;">未分类</div>
<div class="t" style="left:1804.5px;top:815.70px;height:24px;line-height:24px;font-size:15.5px;color:#222;font-weight:normal;letter-spacing:1.1px;">2023-08-28 14:16:15</div>
<div class="t" style="left:2157px;top:815.70px;height:24px;line-height:24px;font-size:15px;color:#4e6ef2;font-weight:normal;letter-spacing:2.2px;">编辑</div>
<div class="b" style="left:2202.5px;top:819.7px;width:1.0px;height:16.0px;background:#dcdfe6"></div>
<div class="t" style="left:2215px;top:815.70px;height:24px;line-height:24px;font-size:15px;color:#4e6ef2;font-weight:normal;letter-spacing:2.2px;">删除</div>
<div class="b" style="left:370px;top:937.24px;width:2120px;height:1.0px;background:#ebeef5"></div>
<div class="t" style="left:390px;top:889.15px;height:24px;line-height:24px;font-size:15.5px;color:#222;font-weight:normal;letter-spacing:0.95px;">1693203139839167276</div>
<div class="t" style="left:746.5px;top:889.15px;height:24px;line-height:24px;font-size:15px;color:#222;font-weight:normal;letter-spacing:1.25px;">测试表格模板</div>
<div class="t" style="left:1099.5px;top:889.15px;height:24px;line-height:24px;font-size:15px;color:#222;font-weight:normal;letter-spacing:1.25px;">通用模板</div>
<div class="t" style="left:1452px;top:889.15px;height:24px;line-height:24px;font-size:15px;color:#222;font-weight:normal;letter-spacing:1.25px;">未分类</div>
<div class="t" style="left:1804.5px;top:889.15px;height:24px;line-height:24px;font-size:15.5px;color:#222;font-weight:normal;letter-spacing:1.1px;">2023-08-28 14:12:19</div>
<div class="t" style="left:2157px;top:889.15px;height:24px;line-height:24px;font-size:15px;color:#4e6ef2;font-weight:normal;letter-spacing:2.2px;">编辑</div>
<div class="b" style="left:2202.5px;top:893.15px;width:1.0px;height:16.0px;background:#dcdfe6"></div>
<div class="t" style="left:2215px;top:889.15px;height:24px;line-height:24px;font-size:15px;color:#4e6ef2;font-weight:normal;letter-spacing:2.2px;">删除</div>
<div class="b" style="left:370px;top:1010.78px;width:2120px;height:1.0px;background:#ebeef5"></div>
<div class="t" style="left:390px;top:962.60px;height:24px;line-height:24px;font-size:15.5px;color:#222;font-weight:normal;letter-spacing:0.95px;">1680247965759139191</div>
<div class="t" style="left:746.5px;top:962.60px;height:24px;line-height:24px;font-size:15px;color:#222;font-weight:normal;letter-spacing:1.25px;">创建模板演示</div>
<div class="t" style="left:1099.5px;top:962.60px;height:24px;line-height:24px;font-size:15px;color:#222;font-weight:normal;letter-spacing:1.25px;">通用模板</div>
<div class="t" style="left:1452px;top:962.60px;height:24px;line-height:24px;font-size:15px;color:#222;font-weight:normal;letter-spacing:1.25px;">未分类</div>
<div class="t" style="left:1804.5px;top:962.60px;height:24px;line-height:24px;font-size:15.5px;color:#222;font-weight:normal;letter-spacing:1.1px;">2023-03-31 15:32:45</div>
<div class="t" style="left:2157px;top:962.60px;height:24px;line-height:24px;font-size:15px;color:#4e6ef2;font-weight:normal;letter-spacing:2.2px;">编辑</div>
<div class="b" style="left:2202.5px;top:966.6px;width:1.0px;height:16.0px;background:#dcdfe6"></div>
<div class="t" style="left:2215px;top:962.60px;height:24px;line-height:24px;font-size:15px;color:#4e6ef2;font-weight:normal;letter-spacing:2.2px;">删除</div>
<div class="b" style="left:370px;top:1084.32px;width:2120px;height:1.0px;background:#ebeef5"></div>
<div class="t" style="left:390px;top:1036.05px;height:24px;line-height:24px;font-size:15.5px;color:#222;font-weight:normal;letter-spacing:0.95px;">1683877228197115764</div>
<div class="t" style="left:746.5px;top:1036.05px;height:24px;line-height:24px;font-size:15px;color:#222;font-weight:normal;letter-spacing:1.25px;">测试静默签的模板</div>
<div class="t" style="left:1099.5px;top:1036.05px;height:24px;line-height:24px;font-size:15px;color:#222;font-weight:normal;letter-spacing:1.25px;">通用模板</div>
<div class="t" style="left:1452px;top:1036.05px;height:24px;line-height:24px;font-size:15px;color:#222;font-weight:normal;letter-spacing:1.25px;">未分类</div>
<div class="t" style="left:1804.5px;top:1036.05px;height:24px;line-height:24px;font-size:15.5px;color:#222;font-weight:normal;letter-spacing:1.1px;">2023-05-12 15:40:28</div>
<div class="t" style="left:2157px;top:1036.05px;height:24px;line-height:24px;font-size:15px;color:#4e6ef2;font-weight:normal;letter-spacing:2.2px;">编辑</div>
<div class="b" style="left:2202.5px;top:1040.05px;width:1.0px;height:16.0px;background:#dcdfe6"></div>
<div class="t" style="left:2215px;top:1036.05px;height:24px;line-height:24px;font-size:15px;color:#4e6ef2;font-weight:normal;letter-spacing:2.2px;">删除</div>
<div class="b" style="left:370px;top:1157.86px;width:2120px;height:1.0px;background:#ebeef5"></div>
<div class="t" style="left:390px;top:1109.50px;height:24px;line-height:24px;font-size:15.5px;color:#222;font-weight:normal;letter-spacing:0.95px;">1687246145101110185</div>
<div class="t" style="left:746.5px;top:1109.50px;height:24px;line-height:24px;font-size:15px;color:#222;font-weight:normal;letter-spacing:1.25px;">测码2</div>
<div class="t" style="left:1099.5px;top:1109.50px;height:24px;line-height:24px;font-size:15px;color:#222;font-weight:normal;letter-spacing:1.25px;">通用模板</div>
<div class="t" style="left:1452px;top:1109.50px;height:24px;line-height:24px;font-size:15px;color:#222;font-weight:normal;letter-spacing:1.25px;">未分类</div>
<div class="t" style="left:1804.5px;top:1109.50px;height:24px;line-height:24px;font-size:15.5px;color:#222;font-weight:normal;letter-spacing:1.1px;">2023-06-20 15:29:05</div>
<div class="t" style="left:2157px;top:1109.50px;height:24px;line-height:24px;font-size:15px;color:#4e6ef2;font-weight:normal;letter-spacing:2.2px;">编辑</div>
<div class="b" style="left:2202.5px;top:1113.5px;width:1.0px;height:16.0px;background:#dcdfe6"></div>
<div class="t" style="left:2215px;top:1109.50px;height:24px;line-height:24px;font-size:15px;color:#4e6ef2;font-weight:normal;letter-spacing:2.2px;">删除</div>
<div class="b" style="left:370px;top:1231.4px;width:2120px;height:1.0px;background:#ebeef5"></div>
<div class="t" style="left:390px;top:1182.95px;height:24px;line-height:24px;font-size:15.5px;color:#222;font-weight:normal;letter-spacing:0.95px;">1687165899425133371</div>
<div class="t" style="left:746.5px;top:1182.95px;height:24px;line-height:24px;font-size:15px;color:#222;font-weight:normal;letter-spacing:1.25px;">测码</div>
<div class="t" style="left:1099.5px;top:1182.95px;height:24px;line-height:24px;font-size:15px;color:#222;font-weight:normal;letter-spacing:1.25px;">通用模板</div>
<div class="t" style="left:1452px;top:1182.95px;height:24px;line-height:24px;font-size:15px;color:#222;font-weight:normal;letter-spacing:1.25px;">未分类</div>
<div class="t" style="left:1804.5px;top:1182.95px;height:24px;line-height:24px;font-size:15.5px;color:#222;font-weight:normal;letter-spacing:1.1px;">2023-06-19 17:11:39</div>
<div class="t" style="left:2157px;top:1182.95px;height:24px;line-height:24px;font-size:15px;color:#4e6ef2;font-weight:normal;letter-spacing:2.2px;">编辑</div>
<div class="b" style="left:2202.5px;top:1186.95px;width:1.0px;height:16.0px;background:#dcdfe6"></div>
<div class="t" style="left:2215px;top:1182.95px;height:24px;line-height:24px;font-size:15px;color:#4e6ef2;font-weight:normal;letter-spacing:2.2px;">删除</div>
<div class="b" style="left:370px;top:1231.5px;width:2120px;height:1.0px;background:#ebeef5"></div>
<div class="t" style="left:1889.5px;top:1258.00px;height:24px;line-height:24px;font-size:15.2px;color:#222;font-weight:normal;letter-spacing:0px;">共 36 条</div>
<div class="b" style="left:1964px;top:1255px;width:125px;height:30px;border:1px solid #dcdfe6;border-radius:4px;background:#fff"></div>
<div class="t" style="left:1988.5px;top:1257.50px;height:25px;line-height:25px;font-size:16px;color:#606266;font-weight:normal;letter-spacing:0px;">10条/页</div>
<svg style="left:2068px;top:1267px" width="10" height="6"><path d="M0,0H10L5,5.5Z" fill="#a0a3a8"/></svg>
<div class="b" style="left:2113px;top:1253px;width:30px;height:30px;border:1px solid #e4e7ed;border-radius:3px;background:#fff"></div>
<div class="b" style="left:2153px;top:1253px;width:30px;height:30px;border:1px solid #3d6ef5;border-radius:3px;background:#fff"></div>
<div class="t" style="left:2164px;top:1256.80px;height:24px;line-height:24px;font-size:15.5px;color:#222;font-weight:normal;letter-spacing:0px;">1</div>
<div class="b" style="left:2193px;top:1253px;width:30px;height:30px;border:1px solid #e4e7ed;border-radius:3px;background:#fff"></div>
<div class="t" style="left:2204px;top:1256.80px;height:24px;line-height:24px;font-size:15.5px;color:#222;font-weight:normal;letter-spacing:0px;">2</div>
<div class="b" style="left:2233px;top:1253px;width:30px;height:30px;border:1px solid #e4e7ed;border-radius:3px;background:#fff"></div>
<div class="t" style="left:2244px;top:1256.80px;height:24px;line-height:24px;font-size:15.5px;color:#222;font-weight:normal;letter-spacing:0px;">3</div>
<div class="b" style="left:2273px;top:1253px;width:30px;height:30px;border:1px solid #e4e7ed;border-radius:3px;background:#fff"></div>
<div class="t" style="left:2284px;top:1256.80px;height:24px;line-height:24px;font-size:15.5px;color:#222;font-weight:normal;letter-spacing:0px;">4</div>
<div class="b" style="left:2313px;top:1253px;width:30px;height:30px;border:1px solid #e4e7ed;border-radius:3px;background:#fff"></div>
<svg style="left:2123px;top:1262px" width="8" height="12"><path d="M7,1L2,6L7,11" fill="none" stroke="#c0c4cc" stroke-width="1.6"/></svg>
<svg style="left:2324px;top:1262px" width="8" height="12"><path d="M1,1L6,6L1,11" fill="none" stroke="#222" stroke-width="1.6"/></svg>
<div class="t" style="left:2377px;top:1258.00px;height:24px;line-height:24px;font-size:15px;color:#222;font-weight:normal;letter-spacing:0px;">前往</div>
<div class="b" style="left:2413px;top:1255px;width:57px;height:30px;border:1px solid #dcdfe6;border-radius:4px;background:#fff"></div>
<div class="t" style="left:2437px;top:1256.50px;height:27px;line-height:27px;font-size:17px;color:#222;font-weight:normal;letter-spacing:0px;">1</div>
<div class="t" style="left:2474.5px;top:1258.00px;height:24px;line-height:24px;font-size:15px;color:#222;font-weight:normal;letter-spacing:0px;">页</div>
<svg style="left:0;top:0" width="2560" height="1390">
<g fill="none" stroke="#f73338" stroke-width="3">
<rect x="691.5" y="141.5" width="139" height="75"/>
<rect x="17.5" y="314.5" width="201" height="72"/>
<rect x="694.5" y="315.5" width="120" height="60"/>
</g>
<g fill="#f73338">
<path d="M675.2,196.2 L271.2,320.6 L269.4,318 L256.3,329.7 L274,332.9 L273.3,329.2 L674.9,196.8 Z"/>
<path d="M267,362.8 L340,362.3 L676.2,362.2 L676.25,358 L691.25,365.9 L675.2,373.9 L675.9,370 L440,366.6 L267,364.1 Z"/>
</g>
</svg>
</body></html>
